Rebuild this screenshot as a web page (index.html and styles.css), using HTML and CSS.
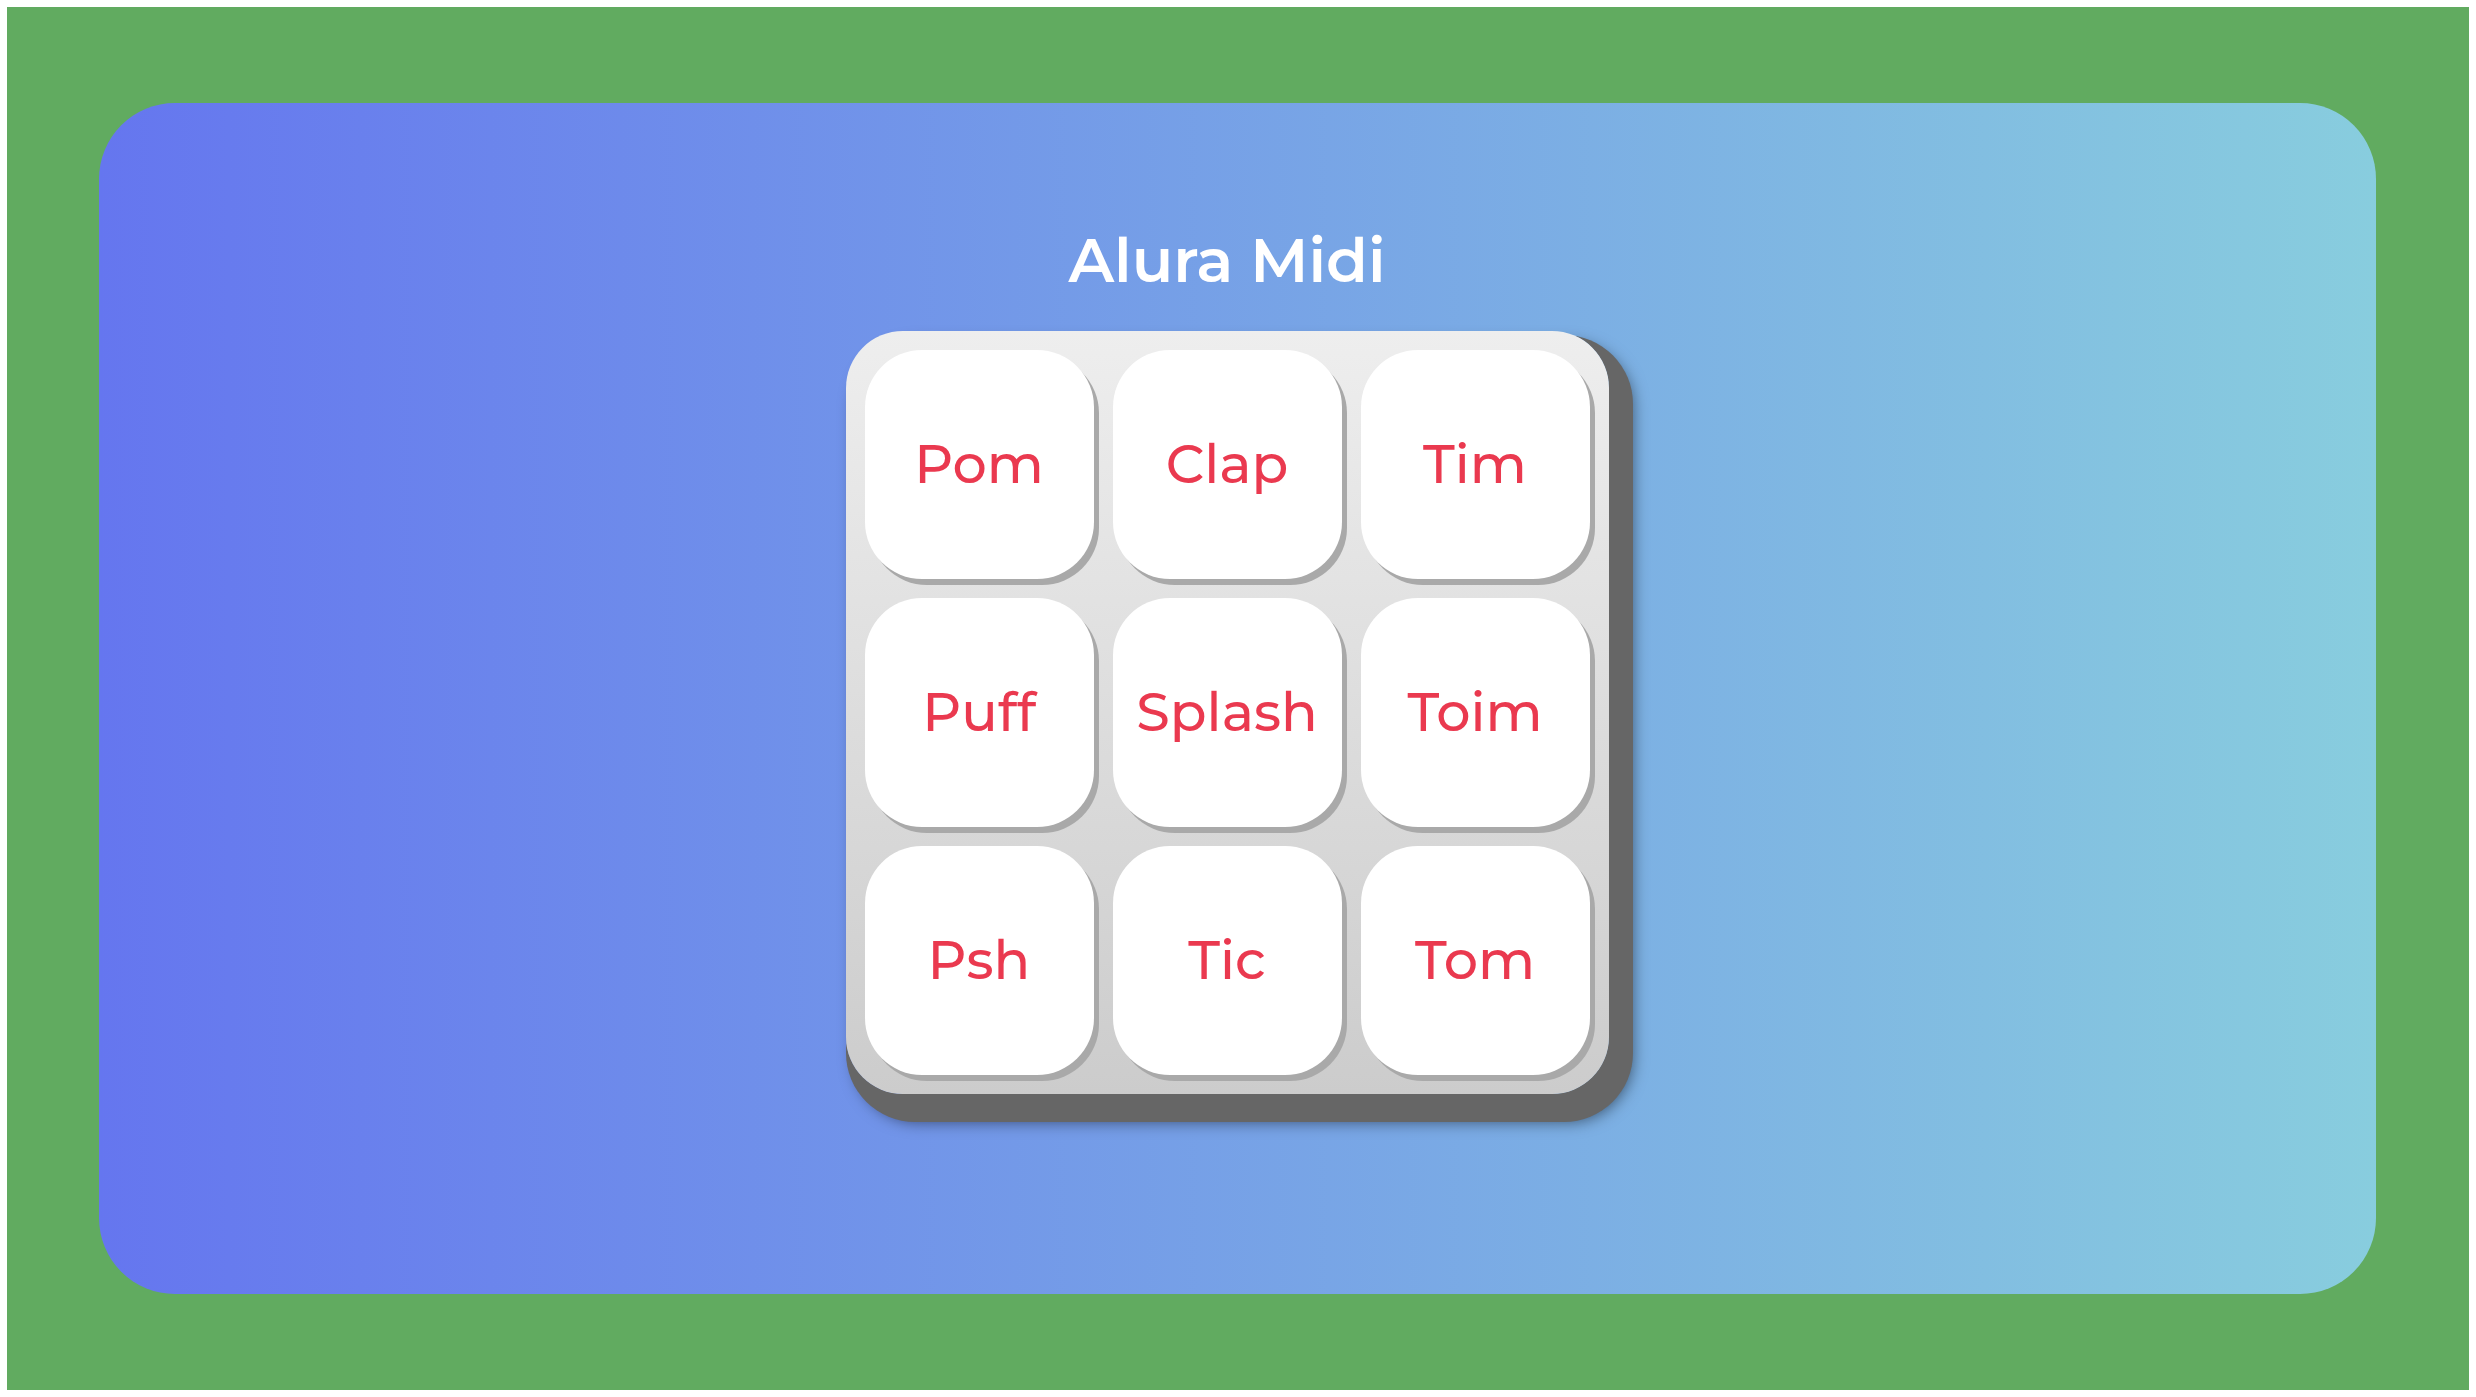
FILE: index.html
```html
<!DOCTYPE html>
<html lang="pt-BR">
<head>
  <meta charset="UTF-8">
  <meta name="viewport" content="width=device-width, initial-scale=1">
  <title>Alura Midi</title>
  <link rel="stylesheet" href="styles.css">
</head>
<body>
  <div class="page">
    <main class="stage">
      <h1 class="title">Alura Midi</h1>
      <section class="keyboard" aria-label="Teclado">
        <button type="button" class="key">Pom</button>
        <button type="button" class="key">Clap</button>
        <button type="button" class="key">Tim</button>
        <button type="button" class="key">Puff</button>
        <button type="button" class="key">Splash</button>
        <button type="button" class="key">Toim</button>
        <button type="button" class="key">Psh</button>
        <button type="button" class="key">Tic</button>
        <button type="button" class="key">Tom</button>
      </section>
    </main>
  </div>
</body>
</html>
```
FILE: styles.css
```css
* {
  box-sizing: border-box;
}

body {
  margin: 0;
  background: #fff;
  font-family: Montserrat, Inter, sans-serif;
}

.page {
  display: flex;
  min-height: 100vh;
  padding: 96px 93px 96px 92px;
  border: 7px solid #fff;
  background: #61ab60;
}

.stage {
  flex: 1;
  display: flex;
  flex-direction: column;
  align-items: center;
  justify-content: center;
  gap: 33px;
  padding: 0 21px 82px 0;
  border-radius: 76px;
  background: linear-gradient(90deg, #6576ef, #88cdde);
}

.title {
  margin: 0;
  color: #fff;
  font-size: 61px;
  font-weight: 600;
  line-height: 76px;
}

.keyboard {
  display: grid;
  grid-template-columns: repeat(3, 229px);
  grid-auto-rows: 229px;
  gap: 19px;
  padding: 19px;
  border-radius: 57px;
  background: linear-gradient(#eee, #ccc);
  box-shadow:
    12px 16px 0 12px #666,
    16px 20px 15px 8px rgba(0, 0, 0, 0.5);
}

.key {
  padding: 0;
  border: 0;
  border-radius: 57px;
  background: #fff;
  box-shadow: 5px 6px 0 #a9a9a9;
  color: #ea394f;
  font: inherit;
  font-size: 54px;
  font-weight: 500;
  cursor: pointer;
}

.key:active {
  background: #eee;
}
```
